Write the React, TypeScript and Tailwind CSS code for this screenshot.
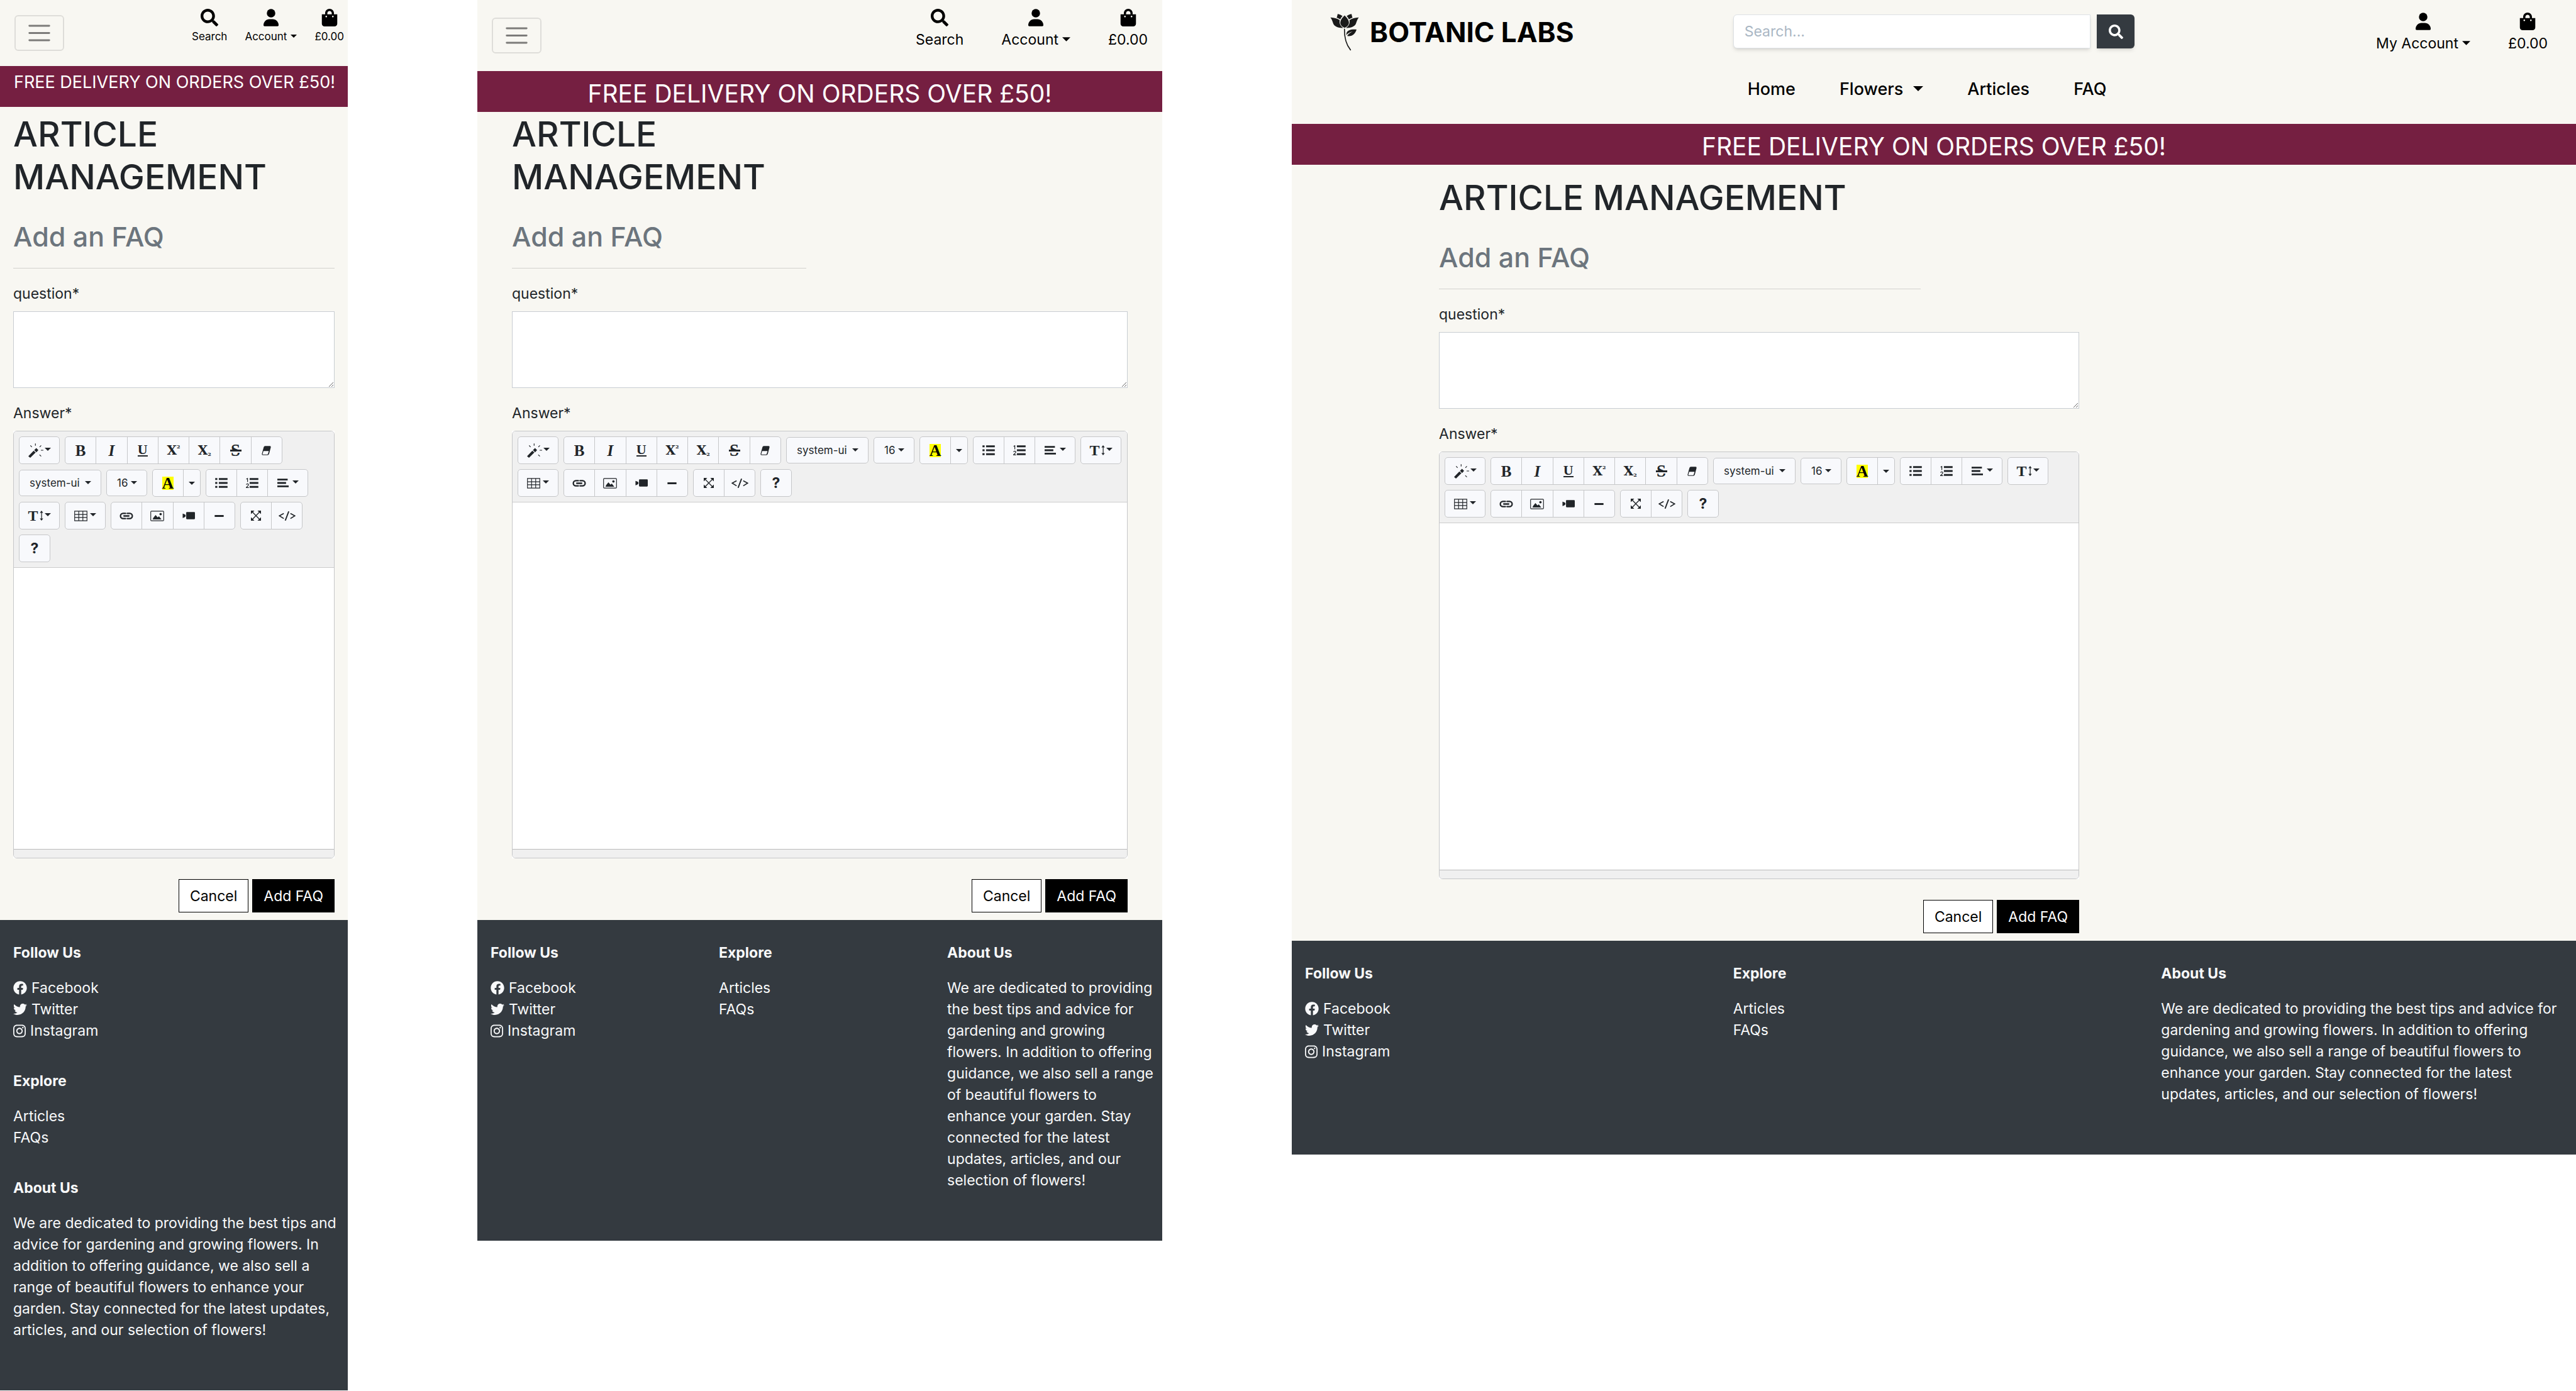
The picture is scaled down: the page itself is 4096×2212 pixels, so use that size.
import React, { useId } from "react";
import { FaSearch, FaShoppingBag, FaFacebook, FaTwitter, FaInstagram } from "react-icons/fa";

type Variant = "mobile" | "tablet" | "desktop";

const ABOUT =
  "We are dedicated to providing the best tips and advice for gardening and growing flowers. In addition to offering guidance, we also sell a range of beautiful flowers to enhance your garden. Stay connected for the latest updates, articles, and our selection of flowers!";

function Caret({ className }: { className: string }) {
  return (
    <svg viewBox="0 0 20 10" className={className} fill="currentColor" aria-hidden="true">
      <path d="M0 0h20L10 10z" />
    </svg>
  );
}

/* ---------- Header ---------- */

const actionStyles: Record<Variant, string> = {
  mobile: "flex gap-7 pt-[14px] pr-[6px] text-[17px] leading-[25px] text-black",
  tablet: "flex gap-[60px] pt-[14px] pr-[23px] text-[23px] leading-[34px] text-black",
  desktop: "flex gap-[60px] pt-[20px] pr-[45px] text-[23px] leading-[34px] text-black",
};

function Actions({ variant }: { variant: Variant }) {
  const item = "flex cursor-pointer flex-col items-center gap-1";
  const label = "flex items-center gap-1.5 whitespace-nowrap";
  const caret = variant === "mobile" ? "mb-0.5 h-[5px] w-[10px]" : "mb-0.5 h-[7px] w-[13px]";
  return (
    <div className={actionStyles[variant]}>
      {variant !== "desktop" && (
        <button type="button" className={item}>
          <FaSearch className="size-7" />
          <span className={label}>Search</span>
        </button>
      )}
      <button type="button" className={item}>
        <svg viewBox="0 0 448 512" className="h-7 w-6" fill="currentColor" aria-hidden="true">
          <circle cx="224" cy="126" r="126" />
          <path d="M176 304h96c97 0 176 79 176 176 0 18-14 32-32 32H32c-18 0-32-14-32-32 0-97 79-176 176-176z" />
        </svg>
        <span className={label}>
          {variant === "desktop" ? "My Account" : "Account"}
          <Caret className={caret} />
        </span>
      </button>
      <a href="#bag" className={item}>
        <FaShoppingBag className="size-7" />
        <span className={label}>£0.00</span>
      </a>
    </div>
  );
}

function Hamburger() {
  return (
    <button
      type="button"
      aria-label="Toggle navigation"
      className="flex h-[57px] w-[79px] items-center justify-center rounded-md border-2 border-black/10"
    >
      <svg viewBox="0 0 30 30" className="size-[43px]" fill="none" stroke="#000" strokeOpacity="0.5" strokeWidth="2" strokeLinecap="round">
        <path d="M4 7h22M4 15h22M4 23h22" />
      </svg>
    </button>
  );
}

function Flower() {
  return (
    <svg viewBox="40 30 196 252" className="h-[60px] w-[46px]" aria-hidden="true">
      <g fill="#1a1a1a">
        <path d="M138 43C118 62 109 78 109 92c0 16 12 28 29 35 17-7 29-19 29-35 0-14-9-30-29-49z" />
        <path d="M42 57c26 1 46 8 63 18-4 21 3 38 23 53-32 1-57-8-66-27-6-17-10-33-20-44z" />
        <path d="M234 57c-26 1-46 8-63 18 4 21-3 38-23 53 32 1 57-8 66-27 6-17 10-33 20-44z" />
        <path d="M91 33c14 3 24 7 33 14-7 7-12 15-15 23-8-5-16-9-25-12 4-8 5-16 7-25z" />
        <path d="M185 33c-14 3-24 7-33 14 7 7 12 15 15 23 8-5 16-9 25-12-4-8-5-16-7-25z" />
        <path d="M219 139c-34-4-62 4-68 24-1 6-1 10-3 14 13-13 26-20 44-25-16 8-27 15-37 31 38 4 54-14 64-44z" />
      </g>
      <path d="M137 136C136 190 144 236 178 277" fill="none" stroke="#1a1a1a" strokeWidth="7" strokeLinecap="round" />
    </svg>
  );
}

function DesktopHeader() {
  return (
    <header className="grid h-[197px] grid-cols-3">
      <a href="#home" className="flex items-center gap-[17px] self-start pt-[21px] pl-[61px] text-black">
        <Flower />
        <span className="text-[44px] leading-[60px] font-bold whitespace-nowrap">BOTANIC LABS</span>
      </a>
      <div className="px-[21px] pt-[23px]">
        <form className="flex gap-[10px]">
          <input
            type="text"
            aria-label="Search"
            placeholder="Search..."
            className="h-[54px] min-w-0 flex-1 rounded-l-md border border-[#dee2e6] bg-white px-[17px] text-[23px] shadow-md shadow-black/10 placeholder:text-[#aab7c4]"
          />
          <button
            type="button"
            aria-label="Search"
            className="flex h-[54px] w-[60px] items-center justify-center rounded-r-md bg-[#343a40] text-white shadow-md shadow-black/10"
          >
            <FaSearch className="size-[23px]" />
          </button>
        </form>
        <nav className="mt-12 flex gap-[70px] pl-[23px] text-[27px] leading-[34px] font-medium whitespace-nowrap text-black">
          <a href="#home">Home</a>
          <button type="button" className="flex items-center gap-4">
            Flowers
            <Caret className="mb-0.5 h-2 w-4" />
          </button>
          <a href="#articles">Articles</a>
          <a href="#faq">FAQ</a>
        </nav>
      </div>
      <div className="flex justify-end">
        <Actions variant="desktop" />
      </div>
    </header>
  );
}

function CompactHeader({ variant }: { variant: Variant }) {
  return (
    <header
      className={
        variant === "mobile"
          ? "flex h-[105px] items-center justify-between pl-[23px]"
          : "flex h-[113px] items-center justify-between pl-[23px]"
      }
    >
      <Hamburger />
      <div className="self-start">
        <Actions variant={variant} />
      </div>
    </header>
  );
}

/* ---------- Editor toolbar ---------- */

const group =
  "flex h-[44px] divide-x divide-[#c6c7c9] overflow-hidden rounded-[5px] border border-[#c6c7c9] bg-[#f8f9fc] text-[#212529]";
const pickGroup =
  "relative flex h-[42px] overflow-hidden rounded-[5px] border border-[#c6c7c9] bg-[#f8f9fc] text-[#212529]";
const tool = "flex flex-1 items-center justify-center";
const serif = "font-['Liberation_Serif',serif] font-bold";
const menuCaret = "mb-1 h-[5px] w-[10px]";

function Tool({ name, children }: { name: string; children: React.ReactNode }) {
  return (
    <button type="button" aria-label={name} className={tool}>
      {children}
    </button>
  );
}

function MenuTool({ name, children }: { name: string; children: React.ReactNode }) {
  return (
    <button type="button" aria-label={name} className="flex w-[63px] items-center justify-center gap-0.5">
      {children}
      <Caret className={menuCaret} />
    </button>
  );
}

function PickList({ name, value, width }: { name: string; value: string; width: string }) {
  return (
    <div className={pickGroup + " " + width}>
      <select
        aria-label={name}
        defaultValue={value}
        className="h-full w-full appearance-none bg-transparent pl-4 text-[17px] leading-[28px]"
      >
        <option>{value}</option>
      </select>
      <Caret className="pointer-events-none absolute top-[17px] right-[15px] h-[5px] w-[10px]" />
    </div>
  );
}

function ListBars() {
  return <path d="M24 1h58v13H24zM24 27h58v13H24zM24 53h58v13H24z" />;
}

function Toolbar() {
  return (
    <div role="toolbar" className="flex flex-wrap items-center gap-2 border-b border-[#ccc] bg-[#f0f0f0] p-2">
      <div className={group}>
        <MenuTool name="Style">
          <svg viewBox="95 88 102 98" className="h-[23px] w-6" fill="currentColor">
            <path d="M95 175l36-37 14 12-37 36zM135 134l14-14 14 14-13 15z" />
            <path d="M143 89v15M109 102l10 11M182 102l-10 11M180 135h17M171 165l11 11" stroke="currentColor" strokeWidth="5" />
          </svg>
        </MenuTool>
      </div>

      <div className={group + " w-[346px]"}>
        <Tool name="Bold">
          <span className={serif + " text-[25px] leading-none"}>B</span>
        </Tool>
        <Tool name="Italic">
          <span className={serif + " text-[25px] leading-none italic"}>I</span>
        </Tool>
        <Tool name="Underline">
          <span className={serif + " border-b-2 border-current text-[22px] leading-[18px]"}>U</span>
        </Tool>
        <Tool name="Superscript">
          <span className="flex items-start font-['DejaVu_Serif',serif] text-[20px] leading-[20px] font-bold">
            X<span className="text-[8px] leading-[8px]">2</span>
          </span>
        </Tool>
        <Tool name="Subscript">
          <span className="flex items-end font-['DejaVu_Serif',serif] text-[20px] leading-[20px] font-bold">
            X<span className="text-[8px] leading-[8px]">2</span>
          </span>
        </Tool>
        <Tool name="Strikethrough">
          <span className="relative flex w-[18px] justify-center">
            <span className={serif + " text-[27px] leading-none"}>S</span>
            <span className="absolute inset-x-0 top-3 h-[5px] border-b-2 border-[#f8f9fc] bg-[#212529]" />
          </span>
        </Tool>
        <Tool name="Remove formatting">
          <svg viewBox="740 109 65 67" className="size-[15px]" fill="currentColor">
            <path fillRule="evenodd" d="M764 110h33q9 0 7 10l-12 46q-3 9-11 9h-32q-10 0-8-10l13-47q2-8 10-8zM752 146l-6 20q-1 4 3 4h29q5 0 6-4l6-20z" />
          </svg>
        </Tool>
      </div>

      <PickList name="Font family" value="system-ui" width="w-[131px]" />
      <PickList name="Font size" value="16" width="w-[65px]" />

      <div className={group + " w-[77px]"}>
        <button type="button" aria-label="Recent colour" className="flex w-[49px] items-center justify-center">
          <span className={serif + " bg-[#ff0] text-[26px] leading-[21px] text-black"}>A</span>
        </button>
        <Tool name="More colours">
          <Caret className="h-[5px] w-[10px]" />
        </Tool>
      </div>

      <div className={group + " w-[163px]"}>
        <Tool name="Unordered list">
          <svg viewBox="0 0 82 67" className="h-4 w-5" fill="currentColor">
            <path d="M0 1h14v13H0zM0 27h14v13H0zM0 53h14v13H0z" />
            <ListBars />
          </svg>
        </Tool>
        <Tool name="Ordered list">
          <svg viewBox="0 0 82 67" className="h-4 w-5" fill="currentColor">
            <path d="M2 8l8-5v24M2 45q1-6 8-6t7 7q-1 5-15 18h17" fill="none" stroke="currentColor" strokeWidth="5" />
            <ListBars />
          </svg>
        </Tool>
        <MenuTool name="Paragraph">
          <svg viewBox="0 0 78 60" className="mr-1 h-[14px] w-[18px]" fill="currentColor">
            <path d="M0 1h71v12H0zM0 24h60v12H0zM0 47h78v12H0z" />
          </svg>
        </MenuTool>
      </div>

      <div className={group}>
        <MenuTool name="Line height">
          <span className={serif + " text-[24px] leading-none"}>T</span>
          <svg viewBox="0 0 24 66" className="h-4 w-[6px]" fill="currentColor">
            <path d="M12 0l11 14H1zM12 66L1 52h22zM10 8h5v50h-5z" />
          </svg>
        </MenuTool>
      </div>

      <div className={group}>
        <MenuTool name="Table">
          <svg viewBox="0 0 90 71" className="mr-0.5 h-[17px] w-[21px]" fill="none" stroke="currentColor" strokeWidth="5">
            <path d="M3 3h84v65H3zM31 2v67M59 2v67M2 25h86M2 46h86" />
          </svg>
        </MenuTool>
      </div>

      <div className={group + " w-[198px]"}>
        <Tool name="Link">
          <svg viewBox="0 0 94 48" className="h-[11px] w-[22px]" fill="none" stroke="currentColor" strokeWidth="10">
            <path d="M41 6H24a18 18 0 0 0 0 36h17M53 6h17a18 18 0 0 1 0 36H53M30 24h34" strokeLinecap="round" />
          </svg>
        </Tool>
        <Tool name="Picture">
          <svg viewBox="0 0 94 71" className="h-[17px] w-[22px]" fill="currentColor">
            <rect x="3" y="3" width="88" height="65" rx="5" fill="none" stroke="currentColor" strokeWidth="5" />
            <circle cx="70" cy="23" r="8" />
            <path d="M16 59l5-12 15-18 14 16 9-7 17 21z" />
          </svg>
        </Tool>
        <Tool name="Video">
          <svg viewBox="0 0 86 49" className="h-3 w-5" fill="currentColor">
            <rect x="26" y="0" width="60" height="49" rx="5" />
            <path d="M2 10q10 1 20 9v11q-10 9-20 11z" />
          </svg>
        </Tool>
        <Tool name="Horizontal rule">
          <svg viewBox="0 0 62 13" className="h-[3px] w-[15px]" fill="currentColor">
            <path d="M0 0h62v13H0z" />
          </svg>
        </Tool>
      </div>

      <div className={group + " w-[99px]"}>
        <Tool name="Full screen">
          <svg viewBox="0 0 69 69" className="size-4" fill="currentColor">
            <path d="M0 0h24L0 24zM69 0v24L45 0zM0 69V45l24 24zM69 69H45l24-24z" />
            <path d="M8 8l53 53M61 8L8 61" stroke="currentColor" strokeWidth="6" />
          </svg>
        </Tool>
        <Tool name="Code view">
          <svg viewBox="0 0 112 62" className="h-[15px] w-[27px]" fill="none" stroke="currentColor" strokeWidth="7">
            <path d="M34 14L5 30l29 18M78 14l29 16-29 18" />
            <path d="M67 1L44 61" strokeWidth="8" />
          </svg>
        </Tool>
      </div>

      <div className={group + " w-[50px]"}>
        <Tool name="Help">
          <span className="text-[23px] leading-none font-bold">?</span>
        </Tool>
      </div>
    </div>
  );
}

/* ---------- Page body ---------- */

function FaqForm() {
  const id = useId();
  return (
    <form className="max-w-[1018px] text-[23px] leading-[34px]">
      <label htmlFor={id + "q"} className="mt-[23px] block">
        question*
      </label>
      <textarea
        id={id + "q"}
        className="mt-[11px] block h-[122px] w-full resize border border-[#c8cdd2] bg-white px-4 py-2"
      />
      <label htmlFor={id + "a"} className="mt-[23px] block">
        Answer*
      </label>
      <div className="mt-[11px] bg-white">
        <div className="flex h-[680px] flex-col overflow-hidden rounded-md border border-[#c6c7c9]">
          <Toolbar />
          <textarea id={id + "a"} className="block w-full flex-1 resize-none bg-white px-3 py-3" />
          <div className="h-[14px] border-t border-[#bbb] bg-[#f0f0f0]" />
        </div>
      </div>
      <div className="mt-[33px] flex justify-end gap-1.5 pb-3">
        <button type="button" className="h-[53px] border border-black bg-white px-[17px] text-black">
          Cancel
        </button>
        <button type="button" className="h-[53px] border border-black bg-black px-[17px] text-white">
          Add FAQ
        </button>
      </div>
    </form>
  );
}

const footerStyles: Record<Variant, string> = {
  mobile: "grid gap-[46px]",
  tablet: "grid grid-cols-3",
  desktop: "grid grid-cols-3",
};

function Footer({ variant }: { variant: Variant }) {
  const social = "flex items-center gap-[7px]";
  const heading = "mb-[22px] font-bold";
  return (
    <footer
      className={
        "bg-[#343a40] pt-[35px] pb-[79px] text-[23px] leading-[34px] text-[#f8f9fa] " + footerStyles[variant]
      }
    >
      <section className="px-[21px]">
        <h2 className={heading}>Follow Us</h2>
        <ul>
          <li>
            <a href="#facebook" className={social}>
              <FaFacebook className="size-[22px]" /> Facebook
            </a>
          </li>
          <li>
            <a href="#twitter" className={social}>
              <FaTwitter className="size-[22px]" /> Twitter
            </a>
          </li>
          <li>
            <a href="#instagram" className={social}>
              <FaInstagram className="h-[23px] w-5" /> Instagram
            </a>
          </li>
        </ul>
      </section>
      <section className="px-[21px]">
        <h2 className={heading}>Explore</h2>
        <ul>
          <li>
            <a href="#articles">Articles</a>
          </li>
          <li>
            <a href="#faqs">FAQs</a>
          </li>
        </ul>
      </section>
      <section className={variant === "tablet" ? "pr-3 pl-[21px]" : "pr-4 pl-[21px]"}>
        <h2 className={heading}>About Us</h2>
        <p>{ABOUT}</p>
      </section>
    </footer>
  );
}

const bannerStyles: Record<Variant, string> = {
  mobile: "h-[65px] pl-[22px] pt-[9px] text-[27px] leading-[34px]",
  tablet: "h-[65px] pt-3 text-center text-[39px] leading-[48px]",
  desktop: "h-[65px] pt-3 text-center text-[39px] leading-[48px]",
};

const contentStyles: Record<Variant, string> = {
  mobile: "px-[21px] pt-[9px]",
  tablet: "mx-auto max-w-[1021px] px-[21px] pt-px",
  desktop: "mx-auto max-w-[1616px] px-[21px] pt-[18px]",
};

function Site({ variant }: { variant: Variant }) {
  return (
    <div className="min-w-0 bg-[#f8f7f2] text-[#212529]">
      {variant === "desktop" ? <DesktopHeader /> : <CompactHeader variant={variant} />}
      <p className={"overflow-hidden bg-[#751f41] whitespace-nowrap text-white " + bannerStyles[variant]}>
        FREE DELIVERY ON ORDERS OVER £50!
      </p>
      <main className={contentStyles[variant]}>
        <div className={variant === "mobile" ? "" : "grid grid-cols-2 gap-[43px]"}>
          <div>
            <h1 className="text-[55px] leading-[68px] font-medium">ARTICLE MANAGEMENT</h1>
            <h2 className="mt-[34px] text-[43px] leading-[54px] font-medium text-[#6c757d]">Add an FAQ</h2>
            <hr className="mt-[23px] border-t border-black/15" />
          </div>
        </div>
        <FaqForm />
      </main>
      <Footer variant={variant} />
    </div>
  );
}

export default function App() {
  return (
    <div className="grid grid-cols-[780fr_1536fr_2880fr] items-start gap-x-[206px] bg-white font-[Inter,sans-serif]">
      <Site variant="mobile" />
      <Site variant="tablet" />
      <Site variant="desktop" />
    </div>
  );
}
